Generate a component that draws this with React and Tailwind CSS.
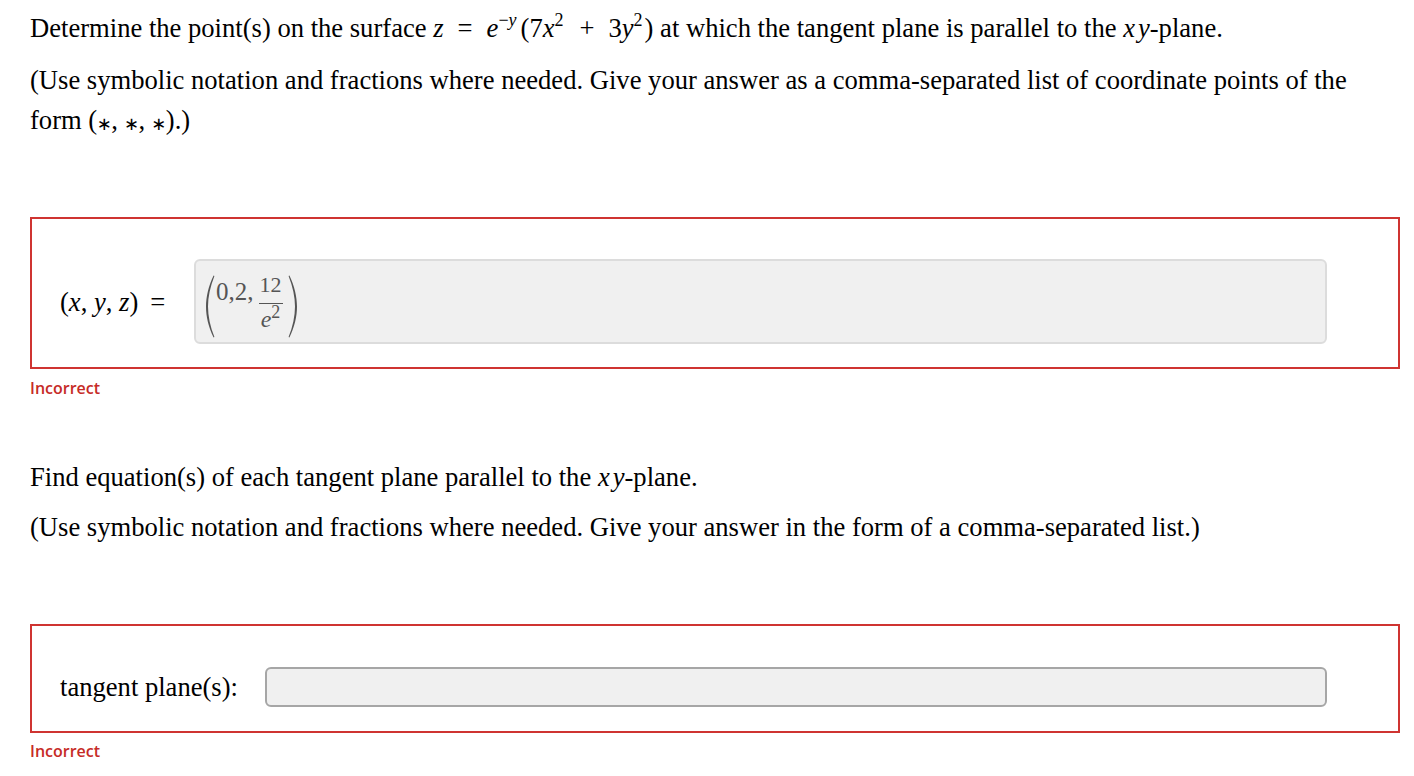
import React from "react";

const serif = { fontFamily: '"Liberation Serif", "Times New Roman", serif' };
const sans = { fontFamily: '"Open Sans", "Noto Sans", sans-serif' };
const star = { fontFamily: '"DejaVu Sans", "DejaVu Serif", sans-serif' };

function I({ children }) {
  return <span className="italic">{children}</span>;
}

function Sup({ children }) {
  return <sup className="text-[18px] relative top-[-11px]">{children}</sup>;
}

function Star() {
  return (
    <span
      style={star}
      className="inline-flex justify-center w-[14px] text-[18px] leading-[18px] relative top-[1px] whitespace-nowrap"
    >
      ∗
    </span>
  );
}

function LeftParen() {
  return (
    <svg width="10" height="63" viewBox="0 0 10 63" className="block">
      <path
        d="M8.6 0.4 C3.4 11, 1 22, 1 31.5 C1 41, 3.4 52, 8.6 62.6 L9.4 62.1 C5.2 51.5, 3 41, 3 31.5 C3 22, 5.2 11.5, 9.4 0.9 Z"
        fill="#555"
      />
    </svg>
  );
}

function RightParen() {
  return (
    <svg width="10" height="63" viewBox="0 0 10 63" className="block">
      <path
        d="M1.4 0.4 C6.6 11, 9 22, 9 31.5 C9 41, 6.6 52, 1.4 62.6 L0.6 62.1 C4.8 51.5, 7 41, 7 31.5 C7 22, 4.8 11.5, 0.6 0.9 Z"
        fill="#555"
      />
    </svg>
  );
}

function Incorrect({ className }) {
  return (
    <div
      style={sans}
      className={"text-[16px] leading-[16px] font-semibold text-[#c62b26] " + className}
    >
      Incorrect
    </div>
  );
}

export default function App() {
  return (
    <div
      style={serif}
      className="bg-white min-h-[776px] w-[1414px] pl-[30px] pt-[8px] text-black text-[26.6px] leading-[40px]"
    >
      <div className="w-[1362px]">
        <p>
          Determine the point(s) on the surface <I>z</I>
          <span className="mx-[14px]">=</span>
          <I>e</I>
          <Sup>
            −<I>y</I>
          </Sup>
          <span className="ml-[4px]">(7</span>
          <I>x</I>
          <Sup>2</Sup>
          <span className="ml-[16px] mr-[14px]">+</span>3<I>y</I>
          <Sup>2</Sup>
          <span className="ml-[2px]">)</span> at which the tangent plane is parallel to the{" "}
          <I>
            x<span className="ml-[3px]">y</span>
          </I>
          -plane.
        </p>
        <p className="mt-[12px]">
          (Use symbolic notation and fractions where needed. Give your answer as a comma-separated list of coordinate
          points of the form (<Star />, <Star />, <Star />).)
        </p>
      </div>

      <div className="mt-[77px] w-[1370px] border-2 border-[#cf3431] pt-[40px] pb-[23px] pl-[28px] pr-[71px] flex items-center">
        <div className="w-[134px] shrink-0 whitespace-nowrap">
          (<I>x</I>, <I>y</I>, <I>z</I>)<span className="ml-[12px]">=</span>
        </div>
        <div className="flex-1 h-[85px] rounded-[6px] border-2 border-[#dcdcdc] bg-[#f0f0f0] flex items-start pl-[9px] text-[#555]">
          <div className="mt-[14px]">
            <LeftParen />
          </div>
          <div className="mt-[18px] ml-[1px] text-[25px] leading-[25px]">0,2,</div>
          <div className="ml-[4px] mt-[13px] flex flex-col items-center w-[26px]">
            <div className="text-[22px] leading-[22px]">12</div>
            <div className="mt-[7px] h-px w-[24px] bg-[#555]"></div>
            <div className="flex items-start">
              <span className="italic text-[24px] leading-[24px] mt-[3px]">e</span>
              <span className="text-[18px] leading-[18px] mt-[-1px]">2</span>
            </div>
          </div>
          <div className="mt-[14px] ml-[4px]">
            <RightParen />
          </div>
        </div>
      </div>
      <Incorrect className="mt-[11px]" />

      <p className="mt-[61px]">
        Find equation(s) of each tangent plane parallel to the{" "}
        <I>
          x<span className="ml-[3px]">y</span>
        </I>
        -plane.
      </p>
      <p className="mt-[10px]">
        (Use symbolic notation and fractions where needed. Give your answer in the form of a comma-separated list.)
      </p>

      <div className="mt-[77px] w-[1370px] border-2 border-[#cf3431] pt-[41px] pb-[24px] pl-[28px] pr-[71px] flex items-center">
        <div className="w-[205px] shrink-0 whitespace-nowrap">tangent plane(s):</div>
        <div className="flex-1 h-[40px] rounded-[6px] border-2 border-[#a6a6a6] bg-[#f0f0f0]"></div>
      </div>
      <Incorrect className="mt-[10px]" />
    </div>
  );
}
